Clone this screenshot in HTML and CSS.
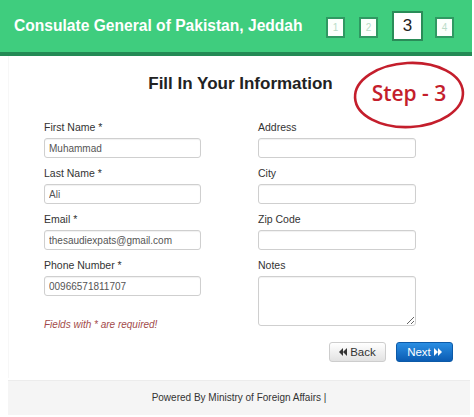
FILE: index.html
```html
<!DOCTYPE html>
<html lang="en">
<head>
<meta charset="UTF-8">
<meta name="viewport" content="width=device-width, initial-scale=1.0">
<title>Consulate General of Pakistan, Jeddah</title>
<!-- Styles -->
<link rel="stylesheet" href="styles.css">
</head>
<body>

<div class="topbar">
  <h1 class="site-title">Consulate General of Pakistan, Jeddah</h1>
  <div class="steps">
    <span class="step">1</span>
    <span class="step">2</span>
    <span class="step current">3</span>
    <span class="step">4</span>
  </div>
</div>

<div class="panel">
  <h2 class="form-title">Fill In Your Information</h2>

  <!-- red annotation drawn on top of the screenshot -->
  <div class="step-mark">
    <svg width="114" height="70" viewBox="0 0 114 70">
      <ellipse cx="57" cy="35" rx="54" ry="32" fill="none" stroke="#c41e2c" stroke-width="2.6" transform="rotate(-3 57 35)"/>
    </svg>
    <span class="step-mark-text">Step - 3</span>
  </div>

  <form class="info-form">
    <div class="col">
      <div class="field">
        <label>First Name *</label>
        <input type="text" value="Muhammad">
      </div>
      <div class="field">
        <label>Last Name *</label>
        <input type="text" value="Ali">
      </div>
      <div class="field">
        <label>Email *</label>
        <input type="text" value="thesaudiexpats@gmail.com">
      </div>
      <div class="field">
        <label>Phone Number *</label>
        <input type="text" value="00966571811707">
      </div>
      <p class="required-note">Fields with * are required!</p>
    </div>

    <div class="col">
      <div class="field">
        <label>Address</label>
        <input type="text">
      </div>
      <div class="field">
        <label>City</label>
        <input type="text">
      </div>
      <div class="field">
        <label>Zip Code</label>
        <input type="text">
      </div>
      <div class="field">
        <label>Notes</label>
        <textarea></textarea>
      </div>
    </div>
  </form>

  <div class="actions">
    <button class="btn btn-back" type="button">
      <svg width="8" height="8" viewBox="0 0 8 8"><path d="M4 0v8L0 4zM8 0v8L4 4z" fill="#333"/></svg>
      Back
    </button>
    <button class="btn btn-next" type="button">
      Next
      <svg width="8" height="8" viewBox="0 0 8 8"><path d="M0 0v8l4-4zM4 0v8l4-4z" fill="#fff"/></svg>
    </button>
  </div>
</div>

<div class="footer">Powered By Ministry of Foreign Affairs |</div>

</body>
</html>
```

FILE: styles.css
```css
body {
  margin: 0;
  font-family: "Liberation Sans", Arial, sans-serif;
  background-color: #fff;
  color: #333;
}

.topbar {
  width: 472px;
  height: 52px;
  background-color: #3fcd7e;
  border-bottom: 4px solid #248a55;
  display: flex;
  align-items: center;
}

.site-title {
  margin: 0 0 0 14px;
  font-size: 15.6px;
  font-weight: bold;
  color: #fff;
  white-space: nowrap;
}

.steps {
  display: flex;
  align-items: center;
  gap: 14px;
  margin: 2px 18px 0 auto;
}

.step {
  width: 19px;
  height: 21px;
  box-sizing: border-box;
  border: 2px solid #2f9962;
  background-color: #fbfffc;
  color: #b9dcc8;
  font-size: 10px;
  display: flex;
  align-items: center;
  justify-content: center;
}

.step.current {
  width: 31px;
  height: 30px;
  margin: 0 -2px 2px 0;
  background-color: #fff;
  color: #222;
  font-size: 17px;
  border-color: #2a8c58;
}

.panel {
  position: relative;
  margin: 0 2px 0 8px;
  padding: 18px 0 16px;
  border-left: 1px solid #f7f7f7;
}

.form-title {
  margin: 0;
  font-size: 17px;
  line-height: 20px;
  font-weight: bold;
  text-align: center;
  color: #222;
}

.step-mark {
  position: absolute;
  left: 343px;
  top: 4px;
  width: 114px;
  height: 70px;
}

.step-mark svg {
  display: block;
}

.step-mark-text {
  position: absolute;
  left: 0;
  right: 0;
  top: 19px;
  text-align: center;
  font-family: "Open Sans", sans-serif;
  font-weight: 600;
  font-size: 21px;
  line-height: 28px;
  color: #c41e2c;
}

.info-form {
  display: grid;
  grid-template-columns: 157px 158px;
  column-gap: 57px;
  margin: 26px 0 0 35px;
}

.col {
  display: flex;
  flex-direction: column;
}

.field {
  display: flex;
  flex-direction: column;
  margin-bottom: 8px;
}

.field label {
  font-size: 10.5px;
  line-height: 14px;
  margin-bottom: 4px;
  color: #333;
}

.field input,
.field textarea {
  box-sizing: border-box;
  height: 20px;
  border: 1px solid #cfcfcf;
  border-radius: 3px;
  box-shadow: inset 0 1px 1px rgba(0, 0, 0, 0.06);
  padding: 0 4px;
  font-family: "Liberation Sans", Arial, sans-serif;
  font-size: 10px;
  color: #555;
  background-color: #fff;
}

.field textarea {
  height: 50px;
  resize: vertical;
}

.required-note {
  margin: 15px 0 0;
  font-size: 10px;
  font-style: italic;
  color: #a24a4a;
}

.actions {
  display: flex;
  justify-content: flex-end;
  gap: 10px;
  margin: 8px 19px 0 0;
}

.btn {
  width: 57px;
  height: 20px;
  border-radius: 3px;
  font-family: "Liberation Sans", Arial, sans-serif;
  font-size: 11.5px;
  display: flex;
  align-items: center;
  justify-content: center;
  gap: 3px;
  padding: 0;
  cursor: pointer;
}

.btn-back {
  background: linear-gradient(#fff, #e2e2e2);
  border: 1px solid #cdcdcd;
  color: #333;
}

.btn-next {
  background: linear-gradient(#2a8ee3, #0b5cb3);
  border: 1px solid #0c5aa8;
  color: #fff;
}

.footer {
  margin: 2px 4px 0 8px;
  height: 34px;
  line-height: 33px;
  background-color: #f5f5f5;
  border-top: 1px solid #ececec;
  text-align: center;
  font-size: 10px;
  color: #333;
}
```
